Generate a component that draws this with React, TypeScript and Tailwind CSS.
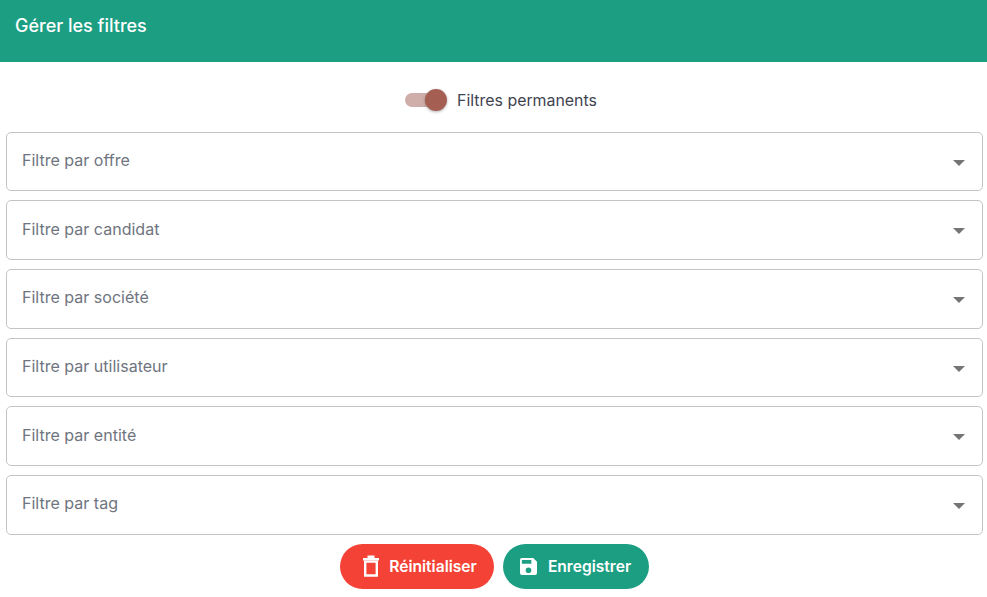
export default function App() {
  const fields = ["Filtre par offre", "Filtre par candidat", "Filtre par société", "Filtre par utilisateur", "Filtre par entité", "Filtre par tag"];
  return (
    <div className="w-[987px] h-[597px] bg-white overflow-hidden font-['Inter',sans-serif]">
      <header className="h-[62px] bg-[#1c9e83] pl-[15px] pt-[14px]">
        <h1 className="text-[18px] leading-[24px] font-medium text-white">Gérer les filtres</h1>
      </header>
      <div className="h-[69.7px] flex items-center justify-center pt-[6px] gap-[10px] pl-[15px]">
        <div className="relative w-[42px] h-[22px] flex items-center">
          <div className="w-[35px] h-[14px] rounded-full bg-[#cfaea9]" />
          <div className="absolute right-0 top-0 w-[22px] h-[22px] rounded-full bg-[#a45f52] shadow-[0_1px_3px_rgba(0,0,0,0.3)]" />
        </div>
        <span className="text-[15.9px] text-[#3f4451] mt-[2px]">Filtres permanents</span>
      </div>
      <div className="flex flex-col gap-[9px] pl-[6px]">
        {fields.map((f) => (
          <div key={f} className="h-[59.7px] w-[977px] rounded-[5px] border border-[#c4c4c4] flex items-center justify-between pl-[15px] pr-[16px] pb-[3px]">
            <span className="text-[16.05px] text-[#6f7580]">{f}</span>
            <svg width="14" height="8" viewBox="0 0 14 8" className="mt-[5px]"><path d="M1 1h12L7 7z" fill="#757575" /></svg>
          </div>
        ))}
      </div>
      <div className="flex justify-center gap-[9px] mt-[9px] pl-[1px]">
        <button className="h-[45px] w-[154px] rounded-full bg-[#f44336] text-white flex items-center justify-center gap-[9px] pl-[6px] text-[15.6px] font-semibold">
          <svg width="18" height="22" viewBox="0 0 18 22" fill="none">
            <path d="M1 3h16v2.4H1z M5.5 0.5h7V3h-7z" fill="#fff" />
            <path d="M3.2 6.6h11.6v13.9H3.2z" stroke="#fff" strokeWidth="2.4" />
          </svg>
          Réinitialiser
        </button>
        <button className="h-[45px] w-[146px] rounded-full bg-[#1c9e83] text-white flex items-center justify-center gap-[11px] text-[15.6px] font-semibold">
          <svg width="17" height="17" viewBox="3 3 18 18" fill="#fff">
            <path d="M17 3H5a2 2 0 0 0-2 2v14a2 2 0 0 0 2 2h14a2 2 0 0 0 2-2V7l-4-4zm-5 16a3 3 0 1 1 0-6 3 3 0 0 1 0 6zm3-10H5V5h10v4z" />
          </svg>
          Enregistrer
        </button>
      </div>
    </div>
  );
}
